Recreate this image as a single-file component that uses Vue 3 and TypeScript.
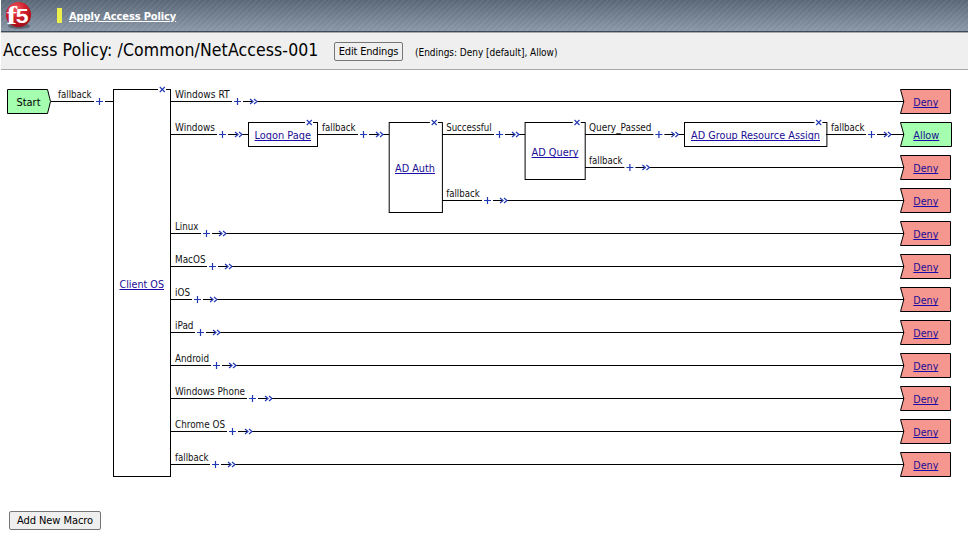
<script setup lang="ts">
interface PolicyNode {
  name: string
  x: number
  y: number
  w: number
  h: number
  textX: number
  textW: number
  baseline: number
}

interface Branch {
  label: string
  row: number
  from: number
  width: number
  plus: number
  to: number
  inset?: number
  expand?: boolean
}

interface Ending {
  name: 'Deny' | 'Allow'
  row: number
}

const nodes: PolicyNode[] = [
  { name: 'Client OS', x: 113, y: 89, w: 57, h: 387, textX: 119.5, textW: 44.5, baseline: 288 },
  { name: 'Logon Page', x: 248, y: 122, w: 69, h: 24, textX: 254.5, textW: 56.5, baseline: 139 },
  { name: 'AD Auth', x: 388.7, y: 122, w: 53.2, h: 90, textX: 395, textW: 40, baseline: 172 },
  { name: 'AD Query', x: 524.6, y: 122, w: 60.1, h: 57, textX: 531.5, textW: 47, baseline: 156 },
  { name: 'AD Group Resource Assign', x: 684, y: 122, w: 142.4, h: 24, textX: 691, textW: 129, baseline: 139 },
]

const END_X = 904

const branches: Branch[] = [
  { label: 'fallback', row: 101, from: 51, width: 33.5, plus: 99, to: 113, inset: 7, expand: false },
  { label: 'Windows RT', row: 101, from: 170, width: 54.5, plus: 237, to: END_X },
  { label: 'Windows', row: 134, from: 170, width: 40, plus: 222, to: 248 },
  { label: 'fallback', row: 134, from: 317, width: 33.5, plus: 363, to: 389 },
  { label: 'Successful', row: 134, from: 442, width: 45.5, plus: 499, to: 525, inset: 4.2 },
  { label: 'Query_Passed', row: 134, from: 585, width: 62.5, plus: 658.4, to: 684, inset: 4 },
  { label: 'fallback', row: 134, from: 826, width: 33.5, plus: 871, to: END_X },
  { label: 'fallback', row: 167, from: 585, width: 33.5, plus: 629.4, to: END_X, inset: 4 },
  { label: 'fallback', row: 200, from: 442, width: 33.5, plus: 487, to: END_X, inset: 4.2 },
  { label: 'Linux', row: 233, from: 170, width: 23.5, plus: 206, to: END_X },
  { label: 'MacOS', row: 266, from: 170, width: 30.5, plus: 212, to: END_X },
  { label: 'iOS', row: 299, from: 170, width: 15, plus: 197, to: END_X },
  { label: 'iPad', row: 332, from: 170, width: 18.5, plus: 200, to: END_X },
  { label: 'Android', row: 365, from: 170, width: 34, plus: 216, to: END_X },
  { label: 'Windows Phone', row: 398, from: 170, width: 70, plus: 252, to: END_X },
  { label: 'Chrome OS', row: 431, from: 170, width: 50, plus: 232, to: END_X },
  { label: 'fallback', row: 464, from: 170, width: 33.5, plus: 215, to: END_X },
]

const endings: Ending[] = Array.from({ length: 12 }, (_, i) => ({
  name: i === 1 ? 'Allow' : 'Deny',
  row: 101 + i * 33,
}))

const labelX = (b: Branch): number => b.from + (b.inset ?? 5)

function endingPath(e: Ending): string {
  const right = e.name === 'Allow' ? 951.5 : 950.5
  const top = e.row - 11.5
  return `M900.5 ${top}H${right}V${top + 24}H900.5L903.8 ${top + 12}Z`
}
</script>

<template>
  <div class="page">
    <header class="topbar">
      <svg class="logo" width="32" height="31" viewBox="0 0 32 31">
        <defs>
          <radialGradient id="ball" cx="0.4" cy="0.25" r="0.75">
            <stop offset="0" stop-color="#ee5a62" />
            <stop offset="0.5" stop-color="#d01f2c" />
            <stop offset="1" stop-color="#a30d18" />
          </radialGradient>
        </defs>
        <ellipse cx="18" cy="26" rx="11" ry="3" fill="#38424e" opacity="0.55" />
        <circle cx="17.5" cy="14.7" r="12.6" fill="url(#ball)" />
        <text class="logo-f" x="5.5" y="24" textLength="10.5" lengthAdjust="spacingAndGlyphs">f</text>
        <text class="logo-5" x="14.7" y="22.5" textLength="12.8" lengthAdjust="spacingAndGlyphs">5</text>
      </svg>
      <span class="marker"></span>
      <a class="apply">Apply Access Policy</a>
    </header>

    <section class="titlebar">
      <h1>Access Policy: /Common/NetAccess-001</h1>
      <button class="btn edit" type="button">Edit Endings</button>
      <span class="summary">(Endings: Deny [default], Allow)</span>
    </section>

    <main class="canvas">
      <svg width="968" height="420" viewBox="0 70 968 420">
        <path class="start" d="M7.5 89.5H47.5L50.5 101.5L47.5 113.5H7.5Z" />
        <text class="node-text plain" x="16.5" y="106" textLength="24" lengthAdjust="spacingAndGlyphs">Start</text>

        <g v-for="(n, i) in nodes" :key="'n' + i">
          <rect class="box" :x="n.x + 0.5" :y="n.y + 0.5" :width="n.w" :height="n.h" />
          <rect class="gap" :x="n.x + n.w - 12" :y="n.y - 3" width="8" height="6" />
          <path
            class="cross"
            :d="`M${n.x + n.w - 10.2} ${n.y - 2}l5 5m0 -5l-5 5`"
          />
          <text class="node-text" :x="n.textX" :y="n.baseline" :textLength="n.textW" lengthAdjust="spacingAndGlyphs">{{ n.name }}</text>
          <path class="underline" :d="`M${n.textX} ${n.baseline + 1.5}h${n.textW}`" />
        </g>

        <g v-for="(e, i) in endings" :key="'e' + i">
          <path :class="['ending', e.name.toLowerCase()]" :d="endingPath(e)" />
          <text
            class="node-text"
            x="913.3"
            :y="e.row + 5"
            :textLength="e.name === 'Allow' ? 26 : 25"
            lengthAdjust="spacingAndGlyphs"
          >{{ e.name }}</text>
          <path class="underline" :d="`M913.3 ${e.row + 6.5}h${e.name === 'Allow' ? 26 : 25}`" />
        </g>

        <g v-for="(b, i) in branches" :key="'b' + i">
          <text class="label" :x="labelX(b)" :y="b.row - 3" :textLength="b.width" lengthAdjust="spacingAndGlyphs">{{ b.label }}</text>
          <path class="wire" :d="`M${b.from} ${b.row + 0.5}H${b.plus - 5}M${b.plus + 6} ${b.row + 0.5}H${b.to}`" />
          <path class="plus" :d="`M${b.plus - 3} ${b.row + 0.5}h7m-3.5 -3.5v7`" />
          <g v-if="b.expand !== false">
            <rect class="gap" :x="b.plus + 15" :y="b.row" width="5" height="1" />
            <path
              class="chevron"
              :d="`M${b.plus + 13} ${b.row - 2}l3 2.5l-3 2.5m4 -5l3 2.5l-3 2.5`"
            />
          </g>
        </g>
      </svg>
    </main>

    <footer class="actions">
      <button class="btn macro" type="button">Add New Macro</button>
    </footer>
  </div>
</template>

<style>
html,
body {
  margin: 0;
  background: #fff;
  overflow: hidden;
}
</style>

<style scoped>
.page {
  width: 968px;
  height: 536px;
  background: #fff;
  color: #000;
  font-family: 'DejaVu Sans Condensed', 'DejaVu Sans', sans-serif;
  font-stretch: condensed;
}

.topbar {
  display: flex;
  box-sizing: border-box;
  height: 33px;
  margin-left: 1px;
  border-bottom: 1px solid #a9a9a9;
  box-shadow: inset 0 -1px 0 #3c4a5a;
  background:
    repeating-linear-gradient(135deg, rgba(255, 255, 255, 0.04) 0 2px, rgba(0, 0, 0, 0.02) 2px 4px),
    linear-gradient(#5b6878, #8c9aaa);
}

.logo {
  display: block;
}

.logo-f,
.logo-5 {
  fill: #fff;
  font-family: 'Liberation Sans', sans-serif;
  font-weight: bold;
}

.logo-f {
  font-family: 'Liberation Serif', serif;
  font-size: 25px;
}

.logo-5 {
  font-size: 20.5px;
}

.marker {
  width: 5px;
  height: 15px;
  margin: 8px 0 0 24px;
  background: #edf04a;
}

.apply {
  margin: 9px 0 0 7px;
  color: #fff;
  font-size: 11px;
  font-weight: bold;
  letter-spacing: -0.13px;
  line-height: 15px;
  white-space: nowrap;
  text-decoration: underline;
}

.titlebar {
  display: flex;
  box-sizing: border-box;
  height: 37px;
  margin-left: 1px;
  padding-left: 2px;
  border-bottom: 1px solid #a9a9a9;
  background: #efefef;
}

h1 {
  width: 331px;
  margin: 6px 0 0;
  font-size: 17.5px;
  font-weight: normal;
  letter-spacing: 0.1px;
  line-height: 22px;
  white-space: nowrap;
}

.btn {
  box-sizing: border-box;
  height: 19px;
  padding: 0;
  border: 1px solid #767676;
  border-radius: 2px;
  background: #efefef;
  color: #000;
  font-family: inherit;
  font-size: 11px;
  font-stretch: condensed;
  line-height: 17px;
  text-align: center;
  white-space: nowrap;
}

.edit {
  width: 69px;
  margin-top: 9px;
  letter-spacing: -0.17px;
}

.summary {
  margin: 12px 0 0 12px;
  font-size: 10px;
  letter-spacing: -0.03px;
  line-height: 15px;
  white-space: nowrap;
}

.canvas,
.canvas svg {
  display: block;
  height: 420px;
}

.start {
  fill: #a4ffae;
  stroke: #000;
}

.box {
  fill: #fff;
  stroke: #000;
}

.gap {
  fill: #fff;
}

.cross,
.plus,
.chevron {
  fill: none;
  stroke: #2138b4;
}

.cross {
  stroke-width: 1.1;
}

.plus,
.chevron {
  stroke-width: 1.2;
}

.ending {
  stroke: #000;
}

.deny {
  fill: #f6978f;
}

.allow {
  fill: #a4ffae;
}

.wire,
.underline {
  fill: none;
  stroke: #000;
  stroke-width: 1;
}

.underline {
  stroke: #1a0dab;
}

.node-text {
  fill: #190c94;
  font-size: 11px;
}

.node-text.plain {
  fill: #000;
}

.label {
  fill: #111;
  font-size: 10px;
}

.actions {
  padding: 21px 0 0 9px;
}

.macro {
  display: block;
  width: 92px;
  letter-spacing: -0.06px;
}
</style>
